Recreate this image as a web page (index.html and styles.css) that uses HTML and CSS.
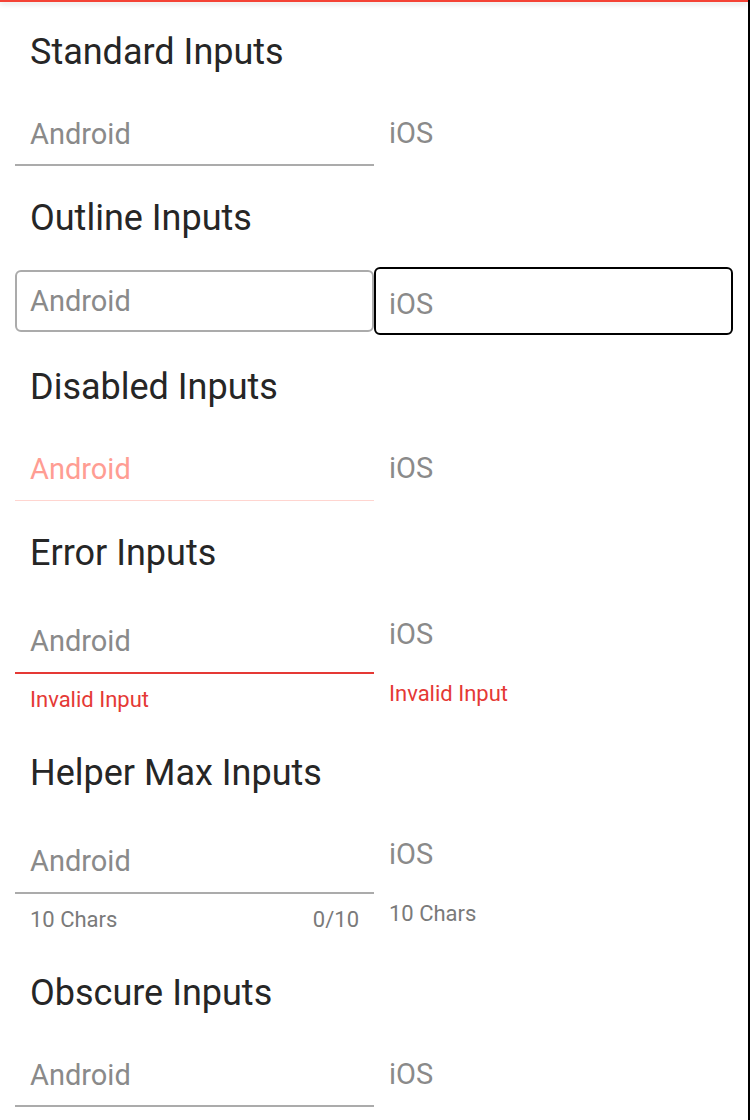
FILE: index.html
```html
<!DOCTYPE html>
<html>
<head>
<meta charset="utf-8">
<link rel="stylesheet" href="styles.css">
</head>
<body>
<div class="topbar"></div>
<main class="page">
  <section class="section">
    <h2 class="heading">Standard Inputs</h2>
    <div class="row">
      <div class="col"><div class="field underline">Android</div></div>
      <div class="col"><div class="ios">iOS</div></div>
    </div>
  </section>

  <section class="section">
    <h2 class="heading">Outline Inputs</h2>
    <div class="row row-outline">
      <div class="col"><div class="field outlined">Android</div></div>
      <div class="col"><div class="ios-outlined">iOS</div></div>
    </div>
  </section>

  <section class="section">
    <h2 class="heading">Disabled Inputs</h2>
    <div class="row">
      <div class="col"><div class="field underline disabled">Android</div></div>
      <div class="col"><div class="ios">iOS</div></div>
    </div>
  </section>

  <section class="section">
    <h2 class="heading">Error Inputs</h2>
    <div class="row">
      <div class="col">
        <div class="field underline tall error">Android</div>
        <div class="helper error-text">Invalid Input</div>
      </div>
      <div class="col">
        <div class="ios">iOS</div>
        <div class="ios-helper error-text">Invalid Input</div>
      </div>
    </div>
  </section>

  <section class="section">
    <h2 class="heading">Helper Max Inputs</h2>
    <div class="row">
      <div class="col">
        <div class="field underline tall">Android</div>
        <div class="helper helper-split"><span>10 Chars</span><span>0/10</span></div>
      </div>
      <div class="col">
        <div class="ios">iOS</div>
        <div class="ios-helper">10 Chars</div>
      </div>
    </div>
  </section>

  <section class="section">
    <h2 class="heading">Obscure Inputs</h2>
    <div class="row">
      <div class="col"><div class="field underline">Android</div></div>
      <div class="col"><div class="ios">iOS</div></div>
    </div>
  </section>
</main>
</body>
</html>
```

FILE: styles.css
```css
html, body {
  margin: 0;
  padding: 0;
  background: #ffffff;
}

body {
  font-family: Roboto, "Noto Sans", sans-serif;
  width: 748px;
  height: 1120px;
  border-right: 2px solid #000000;
  overflow: hidden;
  position: relative;
}

.topbar {
  height: 2px;
  background: #f44336;
  box-shadow: 0 2px 5px rgba(0, 0, 0, 0.18);
  position: relative;
  z-index: 1;
}

.page {
  padding: 0 15px;
  margin-top: -2px;
}

.heading {
  margin: 0;
  padding: 32px 15px 20px;
  font-size: 36px;
  line-height: 40px;
  font-weight: 400;
  color: #262626;
}

.row {
  display: flex;
  align-items: flex-start;
}

.col {
  flex: 0 0 359px;
  width: 359px;
}

.field {
  box-sizing: border-box;
  height: 74px;
  padding: 27px 15px 0;
  font-size: 29px;
  line-height: 30px;
  color: #8a8a8a;
}

.underline {
  border-bottom: 2px solid #ababab;
}

.tall {
  height: 81px;
  padding-top: 33px;
}

.disabled {
  color: #ff9d93;
  border-bottom: 1px solid #ffd5d0;
}

.error {
  border-bottom-color: #e53935;
}

.outlined {
  height: 62px;
  margin-top: 12px;
  padding-top: 14px;
  border: 2px solid #ababab;
  border-radius: 6px;
  padding-left: 13px;
}

.ios {
  padding: 26px 15px 0;
  font-size: 29px;
  line-height: 30px;
  color: #8a8a8a;
}

.ios-outlined {
  box-sizing: border-box;
  height: 68px;
  margin-top: 9px;
  padding: 20px 13px 0;
  border: 2px solid #000000;
  border-radius: 6px;
  font-size: 29px;
  line-height: 30px;
  color: #8a8a8a;
}

.helper {
  padding: 13px 15px 8px;
  font-size: 22px;
  line-height: 26px;
  color: #7a7a7a;
}

.helper-split {
  display: flex;
  justify-content: space-between;
}

.ios-helper {
  padding: 32px 15px 0;
  font-size: 22px;
  line-height: 26px;
  color: #7a7a7a;
}

.error-text {
  color: #e53935;
}
```
